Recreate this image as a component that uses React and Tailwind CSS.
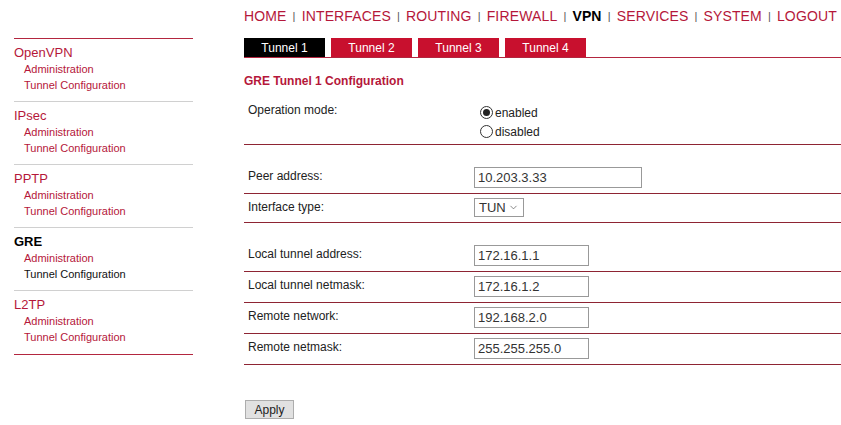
import React from "react";
import { ChevronDown } from "lucide-react";

const navItems = ["HOME", "INTERFACES", "ROUTING", "FIREWALL", "VPN", "SERVICES", "SYSTEM", "LOGOUT"];

const sections = [
  { name: "OpenVPN" },
  { name: "IPsec" },
  { name: "PPTP" },
  { name: "GRE", active: true },
  { name: "L2TP" },
];

function Radio({ checked, label }) {
  return (
    <div className="flex items-center h-[19px]">
      <span className="ml-[6px] w-[13px] h-[13px] rounded-full border border-[#333] bg-white flex items-center justify-center">
        {checked && <span className="w-[7px] h-[7px] rounded-full bg-[#222]"></span>}
      </span>
      <span className="ml-[2px] text-[12px] text-[#222]">{label}</span>
    </div>
  );
}

function TextBox({ value, wide }) {
  return (
    <div
      className={`${wide ? "w-[168px]" : "w-[115px]"} h-[21px] border border-[#999] bg-white pl-[3px] flex items-center text-[13px] text-[#333]`}
    >
      {value}
    </div>
  );
}

function Row({ label, children }) {
  return (
    <div className="flex border-b border-[#8e2433] pt-[4px] pb-[5px]">
      <div className="w-[230px] pl-[4px] pt-[2px] text-[12px] leading-[14px] text-[#222]">{label}</div>
      <div>{children}</div>
    </div>
  );
}

export default function App() {
  return (
    <div className="w-[841px] h-[425px] bg-white flex overflow-hidden" style={{ fontFamily: '"Liberation Sans", Arial, sans-serif' }}>
      {/* left menu */}
      <div className="w-[244px] pl-[14px] pt-[38px] shrink-0">
        <div className="w-[179px] border-t border-b border-[#b3263f]">
          {sections.map((s, idx) => (
            <div
              key={s.name}
              className={`pt-[6px] pb-[7px] h-[63px] ${idx < sections.length - 1 ? "border-b border-[#d0d0d0]" : ""}`}
            >
              <div className={`text-[13px] leading-[16px] ${s.active ? "text-black font-bold" : "text-[#b5173a]"}`}>
                {s.name}
              </div>
              <div className="pl-[10px] text-[11px] leading-[16px] text-[#b5173a]">Administration</div>
              <div className={`pl-[10px] text-[11px] leading-[16px] ${s.active ? "text-[#111]" : "text-[#b5173a]"}`}>
                Tunnel Configuration
              </div>
            </div>
          ))}
        </div>
      </div>

      {/* main */}
      <div className="flex-1">
        <div className="h-[38px] pt-[7px] flex items-start text-[14px] leading-[18px] tracking-[0.15px]">
          {navItems.map((item, idx) => (
            <React.Fragment key={item}>
              <span className={item === "VPN" ? "font-bold text-black" : "text-[#b5173a]"}>{item}</span>
              {idx < navItems.length - 1 && <span className="mx-[6px] text-[11px] text-[#555]">|</span>}
            </React.Fragment>
          ))}
        </div>

        <div className="flex gap-[6px] border-b border-[#b3263f]">
          {["Tunnel 1", "Tunnel 2", "Tunnel 3", "Tunnel 4"].map((t, idx) => (
            <div
              key={t}
              className={`w-[81px] h-[19px] flex items-center justify-center text-[12px] text-white ${idx === 0 ? "bg-black" : "bg-[#c8102e]"}`}
            >
              {t}
            </div>
          ))}
        </div>

        <div className="mt-[16px] text-[12px] leading-[14px] font-bold text-[#b5173a]">GRE Tunnel 1 Configuration</div>

        <div className="mt-[9px]">
          <div className="flex border-b border-[#8e2433] pt-[4px] pb-[3px]">
            <div className="w-[230px] pl-[4px] pt-[2px] text-[12px] leading-[14px] text-[#222]">Operation mode:</div>
            <div className="pt-[2px]">
              <Radio checked label="enabled" />
              <Radio label="disabled" />
            </div>
          </div>
          <div className="h-[18px]"></div>
          <Row label="Peer address:">
            <TextBox value="10.203.3.33" wide />
          </Row>
          <Row label="Interface type:">
            <div className="w-[50px] h-[19px] border border-[#999] bg-white flex items-center justify-between pl-[4px] pr-[4px] text-[13px] text-[#333]">
              <span>TUN</span>
              <ChevronDown size={11} strokeWidth={1.5} className="text-[#555]" />
            </div>
          </Row>
          <div className="h-[18px]"></div>
          <Row label="Local tunnel address:">
            <TextBox value="172.16.1.1" />
          </Row>
          <Row label="Local tunnel netmask:">
            <TextBox value="172.16.1.2" />
          </Row>
          <Row label="Remote network:">
            <TextBox value="192.168.2.0" />
          </Row>
          <Row label="Remote netmask:">
            <TextBox value="255.255.255.0" />
          </Row>
        </div>

        <button className="mt-[35px] ml-[1px] w-[49px] h-[19px] border border-[#adadad] bg-[#e1e1e1] text-[12px] text-[#222] leading-none">
          Apply
        </button>
      </div>
    </div>
  );
}
